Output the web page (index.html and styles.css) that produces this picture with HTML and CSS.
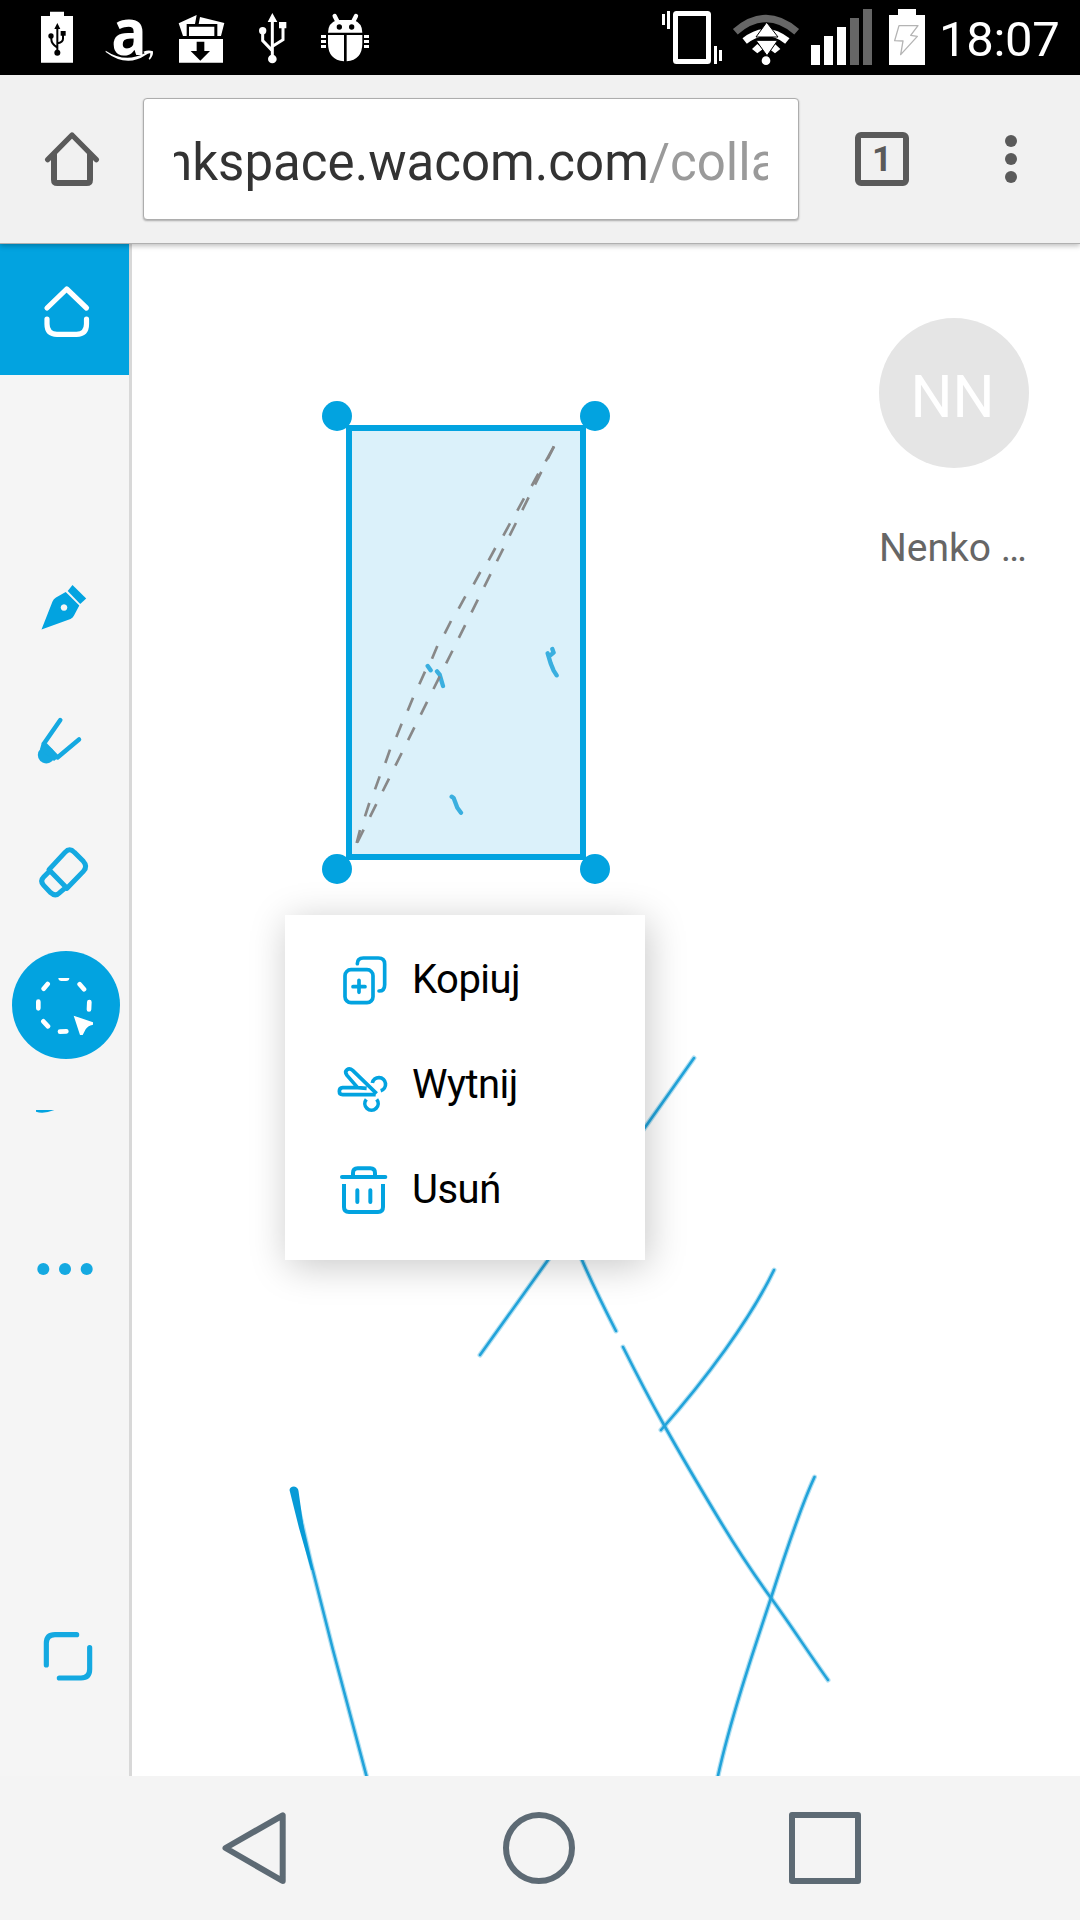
FILE: index.html
```html
<!DOCTYPE html>
<html lang="pl">
<head>
<meta charset="utf-8">
<title>Inkspace</title>
<link rel="stylesheet" href="styles.css">
</head>
<body>
<div class="screen">
  <header class="status">
    <svg class="st" width="72" height="75" viewBox="63 0 216 225">
      <path fill="#fff" d="M123 48H150V35H192V48H219V188H123Z"/>
      <path fill="none" stroke="#000" stroke-width="6" d="M172 158V82M154 108V118Q154 132 171 142M189 98V116Q189 126 173 130"/>
      <path d="M172 69L181 87H163ZM182 93H197V107H182Z"/><circle cx="153" cy="108" r="8"/><circle cx="172" cy="158" r="9"/>
    </svg>
    <div class="amazon"><span>a</span>
      <svg width="72" height="75" viewBox="279 0 216 225"><path fill="#fff" d="M317 152Q375 190 434 160L430 155Q446 149 459 154Q460 168 449 179L446 176Q452 167 451 160Q446 158 437 165Q380 204 317 156Z"/></svg>
    </div>
    <svg class="st" width="72" height="75" viewBox="495 0 216 225">
      <path fill="#fff" d="M536 70L590 45L585 72H560V108H549ZM600 51L673 69L663 108H652V72H596ZM567 80H643V108H567ZM537 117H669V188H537Z"/>
      <path d="M590 125H613V153H630L601 182L572 153H590Z"/>
    </svg>
    <svg class="st" width="72" height="75" viewBox="711 0 216 225">
      <path fill="none" stroke="#fff" stroke-width="9" d="M817 176V60M788 94V122L816 151M849 82V119L819 138"/>
      <path fill="#fff" d="M817 39L832 66H803ZM837 66H859V85H837Z"/><circle cx="788" cy="92" r="11" fill="#fff"/><circle cx="817" cy="177" r="13" fill="#fff"/>
    </svg>
    <svg class="st" width="72" height="75" viewBox="927 0 216 225">
      <g fill="#fff"><path d="M984 98Q984 69 1011 60H1061Q1087 69 1087 98ZM984 105H1032V184Q984 180 984 130ZM1040 105H1087V130Q1087 180 1040 184Z"/>
      <path d="M963 105H978V114H963ZM963 120H978V129H963ZM963 135H978V144H963ZM1092 105H1107V114H1092ZM1092 120H1107V129H1092ZM1092 135H1107V144H1092Z"/></g>
      <path stroke="#fff" stroke-width="13" stroke-linecap="round" d="M1004 48L1012 64M1068 48L1060 64"/>
      <circle cx="1018" cy="81" r="8"/><circle cx="1055" cy="81" r="8"/>
    </svg>
    <div class="grow"></div>
    <svg class="st" width="72" height="75" viewBox="48 0 216 225">
      <rect x="106.500" y="40.500" width="99" height="144" rx="3" fill="none" stroke="#fff" stroke-width="15"/>
      <path fill="#fff" d="M66 42H75V75H66ZM81 33H90V87H81ZM222 138H231V192H222ZM237 150H246V183H237Z"/>
    </svg>
    <svg class="st" width="76" height="75" viewBox="264 0 228 225">
      <path fill="none" stroke="#666" stroke-width="22" d="M286 95Q378 16 470 95"/>
      <path fill="none" stroke="#fff" stroke-width="21" d="M314 123Q378 72 442 123"/>
      <path fill="#fff" d="M336 147L352 132L369 147L352 160ZM388 147L405 132L421 147L405 160Z"/>
      <circle cx="378" cy="182" r="13" fill="#fff"/>
      <path fill="#fff" stroke="#000" stroke-width="3" d="M380 67L348 111H414ZM348 121H413L381 167Z"/>
    </svg>
    <svg class="st" width="76" height="75" viewBox="492 0 228 225">
      <path fill="#fff" d="M513 135H540V195H513ZM552 108H579V195H552ZM591 81H618V195H591Z"/>
      <path fill="#666" d="M630 54H657V195H630ZM669 27H696V195H669Z"/>
    </svg>
    <svg class="st" width="54" height="75" viewBox="720 0 162 225">
      <path fill="#fff" d="M747 45H774V27H828V45H855V195H747Z"/>
      <path fill="none" stroke="#b4b4b4" stroke-width="4" stroke-linejoin="round" d="M777 77H834L812 106L832 109L782 164L789 123L764 122Z"/>
    </svg>
    <span class="clock">18:07</span>
  </header>

  <div class="toolbar">
    <svg class="home" width="143" height="168" viewBox="0 225 429 504" fill="none" stroke="#5a5a5a">
      <path stroke-width="16" stroke-linecap="round" stroke-linejoin="round" d="M143 479L216 405L289 479"/>
      <path stroke-width="18" d="M162 462V539Q162 549 172 549H260Q270 549 270 539V462"/>
    </svg>
    <div class="url"><div class="url-text">nkspace.wacom.com<span>/colla</span></div></div>
    <div class="tabs">1</div>
    <svg class="more" width="12" height="54" viewBox="0 0 12 54" fill="#5a5a5a"><circle cx="6" cy="9" r="6"/><circle cx="6" cy="27" r="6"/><circle cx="6" cy="45" r="6"/></svg>
  </div>

  <main class="page">
    <nav class="side">
      <div class="tile">
        <svg width="129" height="132" viewBox="0 243 129 132" fill="none" stroke="#fff" stroke-width="5.200" stroke-linecap="round" stroke-linejoin="round"><path d="M47 308L66.700 289L86.500 308M47 319V324Q47 334.300 57 334.300H76.500Q86.500 334.300 86.500 324V319"/></svg>
      </div>
      <div class="tools">
        <svg width="129" height="132" viewBox="0 541 129 132" fill="#02a3e0"><path fill-rule="evenodd" d="M41.500 629.500L52.500 601.500Q53.500 599 56 597.500L65.700 592L79.300 605.500L74 615.500Q73 617.500 70.500 619ZM64 604.200a3.300 3.300 0 1 0 .01 0Z"/><path d="M72.500 585L86.200 598.600L80.200 604L67.700 591Z"/></svg>
        <svg width="129" height="132" viewBox="0 674 129 132" fill="none" stroke="#14a9e1" stroke-width="4.500" stroke-linecap="round" stroke-linejoin="round"><path d="M60.300 720L44 743.500L57.500 757.500L79 739.500"/><circle cx="46.300" cy="755" r="8.500" fill="#14a9e1" stroke="none"/><path fill="#14a9e1" stroke="none" d="M42 742L59 757L54 761L40 749Z"/></svg>
        <svg width="129" height="132" viewBox="0 51 387 396" fill="none" stroke="#14a9e1" stroke-width="15" stroke-linejoin="round"><path d="M147 239L195 187Q209 172 223 187L250 214Q264 229 250 244L201 295ZM149 243L131 261Q119 273 131 286L152 308Q166 321 179 308L197 293"/></svg>
        <svg width="129" height="132" viewBox="0 450 387 396"><circle cx="198" cy="645" r="162" fill="#02a3e0"/><path fill="none" stroke="#fff" stroke-width="14" stroke-linecap="round" d="M239 583L252 598M115 635V655M268 636L267 658M130 694L144 709M180 725L199 724M131 596L143 582"/><path fill="#fff" d="M175 564H208Q208 573 198 573H185Q175 573 175 564ZM221 677L279 697V704Q262 708 257 718L248 735H240Z"/></svg>
        <svg width="129" height="129" viewBox="0 849 387 387"><path fill="#02a3e0" d="M108 960H163Q130 973 108 965Z"/></svg>
        <svg width="129" height="132" viewBox="0 1203 129 132" fill="#14a9e1"><circle cx="43.300" cy="1269" r="6"/><circle cx="65" cy="1269" r="6"/><circle cx="86.700" cy="1269" r="6"/></svg>
      </div>
      <svg class="full" width="129" height="132" viewBox="0 30 387 396" fill="none" stroke="#14a9e1" stroke-width="15.500" stroke-linecap="round"><path d="M139 255V190Q139 164 165 164H230M269 203V268Q269 294 243 294H178"/></svg>
    </nav>

    <section class="canvas">
      <svg class="ink" width="948" height="1533" viewBox="132 243 948 1533" fill="none" stroke-linecap="round" stroke-linejoin="round">
        <defs>
          <g id="strokes">
            <path d="M694 1058L646 1126L548 1260L480 1355"/>
            <path d="M570 1230L582 1260Q594 1288 616 1331"/>
            <path d="M623 1347C637 1375 650 1400 664 1425S699 1486 719.500 1520S752 1572 771 1598S810 1655 828 1680"/>
            <path d="M774 1270C750 1320 705 1380 661 1430"/>
            <path d="M814.500 1477C802 1504 786 1551 771 1598C755 1646 730 1720 717.500 1778"/>
            <path d="M294 1490L311 1563L333 1650L367 1778"/>
          </g>
        </defs>
        <use href="#strokes" stroke="#7fcbea" stroke-opacity=".6" stroke-width="5"/>
        <use href="#strokes" stroke="#22a3da" stroke-width="2.600"/>
        <path fill="#089bd7" d="M289.500 1490Q290 1486.500 294 1486.500Q298 1487 298.500 1491L304 1530L313 1570H311L299 1528Z"/>
      </svg>
      <div class="selection">
        <i class="handle tl"></i><i class="handle tr"></i><i class="handle bl"></i><i class="handle br"></i>
      </div>
      <svg class="ink" width="948" height="1533" viewBox="132 243 948 1533">
        <g transform="translate(300 380) scale(.33333)" fill="none">
          <path stroke="#3aafdf" stroke-width="13" stroke-linecap="round" stroke-linejoin="round" d="M383 858L392 871M411 874L419 884L429 918M757 807L761 818L752 825M743 820L752 850L761 872L770 886M455 1250L461 1254L472 1283L483 1298"/>
          <path stroke="#888" stroke-width="8" d="M762 199L737 244M715 281L695 318M672 355L652 392M630 430L610 467M586 504L566 541M541 576L521 613M496 649L476 686M453 723L434 761M412 798L396 836M375 875L358 913M339 953L323 992M305 1031L289 1071M270 1109L256 1149M239 1189L225 1228M208 1269L195 1309M180 1350L170 1389"/>
          <path stroke="#888" stroke-width="8" stroke-dasharray="42.500 43.100" d="M762 199L171 1389"/>
        </g>
      </svg>
      <div class="user">
        <div class="avatar">NN</div>
        <div class="name">Nenko …</div>
      </div>
      <div class="menu">
        <div class="item">
          <svg width="54" height="54" viewBox="195 192 162 162" fill="none" stroke="#02a3e0" stroke-width="11" stroke-linecap="round"><rect x="225" y="239" width="84" height="99" rx="18"/><path d="M249 290H285M267 271V307M262 221Q262 204 280 204H325Q344 204 344 222V284Q344 303 327 303"/></svg>
          <span>Kopiuj</span>
        </div>
        <div class="item">
          <svg width="54" height="54" viewBox="195 507 162 162" fill="none" stroke="#02a3e0" stroke-width="11" stroke-linejoin="round"><path d="M317 614H218Q208 614 208 604T218 593H263L231 556Q223 545 231 539Q239 533 248 541L320 611M263 593L290 595M307 579A20 20 0 1 1 332 602M289 628A20 20 0 1 0 320 628"/></svg>
          <span>Wytnij</span>
        </div>
        <div class="item">
          <svg width="54" height="54" viewBox="195 822 162 162" fill="none" stroke="#02a3e0" stroke-width="12"><path d="M222 882V951Q222 966 237 966H324Q339 966 339 951V882M249 859V849Q249 835 263 835H301Q315 835 315 849V859"/><path stroke-linecap="round" d="M216 861H346M262 901V936M301 901V936"/></svg>
          <span>Usuń</span>
        </div>
      </div>
    </section>
  </main>

  <footer class="nav">
    <svg width="1080" height="144" viewBox="0 1776 1080 144" fill="none" stroke="#5d6a74" stroke-width="6" stroke-linejoin="round"><path d="M225.500 1848L282.700 1815.300V1881Z"/><circle cx="539" cy="1848" r="33"/><rect x="792" y="1815" width="66" height="66"/></svg>
  </footer>
</div>
</body>
</html>
```
FILE: styles.css
```css
* { box-sizing: border-box; }
body { margin: 0; background: #fff; font-family: Roboto, sans-serif; }
svg { display: block; flex: none; }
.screen { width: 1080px; height: 1920px; display: flex; flex-direction: column; overflow: hidden; }
.status { height: 75px; flex: none; display: flex; padding-left: 21px; background: #000; color: #fff; }
.grow { flex: 1; }
.amazon { position: relative; width: 72px; height: 75px; flex: none; }
.amazon svg { position: absolute; left: 0; top: 0; }
.amazon span { display: block; text-align: center; font: bold 64px/75px "Open Sans", sans-serif; margin-top: -7px; transform: scaleX(.92); }
.clock { width: 146px; padding-left: 5px; font-size: 49px; line-height: 79px; letter-spacing: -0.3px; }

.toolbar { position: relative; z-index: 2; height: 168px; flex: none; display: flex; align-items: center; background: #f1f1f1; box-shadow: 0 1px 0 #b0b0b0, 0 3px 5px rgba(0, 0, 0, .25); }
.url { width: 656px; height: 122px; margin-top: -1px; padding: 0 30px; border: 1px solid #adadad; border-radius: 4px; background: #fff; box-shadow: 0 1px 2px rgba(0, 0, 0, .3); }
.url-text { overflow: hidden; width: 594px; height: 120px; line-height: 127px; font-size: 51px; color: #333; white-space: nowrap; text-indent: -10px; letter-spacing: 0.03px; }
.url-text span { color: #9a9a9a; }
.tabs { width: 54px; height: 54px; margin-left: 56px; border: 6px solid #5a5a5a; border-radius: 6px; color: #5a5a5a; font-size: 35px; font-weight: 700; line-height: 43px; text-align: center; }
.more { margin-left: 96px; }

.page { flex: 1; min-height: 0; display: flex; }
.side { width: 132px; flex: none; display: flex; flex-direction: column; background: #f5f5f5; border-right: 3px solid #d8d8d8; }
.tile { height: 132px; flex: none; background: #02a3e0; }
.tools { margin-top: 166px; display: flex; flex-direction: column; gap: 1px; }
.full { margin-top: auto; margin-bottom: 54px; }

.canvas { position: relative; flex: 1; overflow: hidden; }
.ink { position: absolute; left: 0; top: 0; }
.selection { position: absolute; left: 214px; top: 182px; width: 240px; height: 435px; border: 6px solid #02a3e0; background: #dbf1fa; }
.handle { position: absolute; width: 30px; height: 30px; border-radius: 50%; background: #02a3e0; }
.tl { left: -30px; top: -30px; }
.tr { right: -30px; top: -30px; }
.bl { left: -30px; bottom: -30px; }
.br { right: -30px; bottom: -30px; }
.user { display: flex; flex-direction: column; width: 150px; margin: 75px 51px 0 auto; }
.avatar { height: 150px; padding-right: 3px; border-radius: 50%; background: #e5e5e5; color: #fff; font-size: 59px; line-height: 158px; text-align: center; }
.name { margin-top: 56px; height: 48px; font-size: 39px; line-height: 48px; color: #666; white-space: nowrap; }
.menu { position: absolute; left: 153px; top: 672px; width: 360px; height: 345px; padding: 12px 0 0 50px; background: #fff; box-shadow: 3px 6px 36px rgba(0, 0, 0, .22); }
.item { display: flex; align-items: center; height: 105px; font-size: 40px; color: #000; gap: 23px; }
.item svg { margin-top: 2px; }
.item span { letter-spacing: -0.5px; }
.nav { height: 144px; flex: none; background: #f4f4f4; }
```
